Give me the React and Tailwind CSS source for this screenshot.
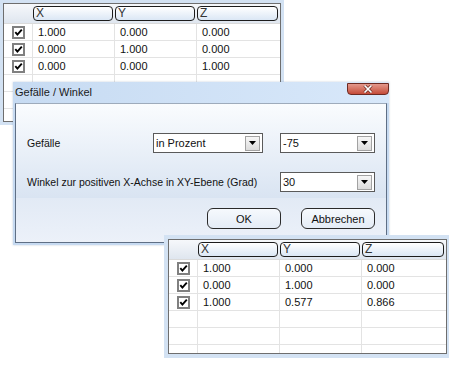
import React from "react";

const CheckBox = () => (
  <svg width="13" height="13" viewBox="0 0 13 13">
    <rect x="1" y="1" width="11" height="11" fill="#fff" stroke="#808080" strokeWidth="2" />
    <path d="M3.3 6.2 L5.4 8.6 L9.8 3.6" stroke="#000" strokeWidth="1.9" fill="none" />
  </svg>
);

const Arrow = () => (
  <svg width="7" height="4" viewBox="0 0 7 4">
    <path d="M0 0 H7 L3.5 4 Z" fill="#000" />
  </svg>
);

// grid with header cells X / Y / Z and checkbox column
const Grid = ({ rows, empty, className }) => (
  <div className={`absolute bg-[#d3e2f3] ${className}`}>
    <div className="h-full flex flex-col overflow-hidden border border-[#6e6e6e] bg-white">
      <div className="h-[20px] shrink-0 flex border-b border-[#dadada] bg-gradient-to-b from-[#f6f8fb] to-[#dfe6ef]">
        <div className="w-[29px]" />
        {["X", "Y", "Z"].map((h, i) => (
          <div key={h} className={`${i === 2 ? "flex-1" : "w-[82px]"} pt-[2px] pr-[2px]`}>
            <div className="h-[15px] rounded-[4px] border-[1.5px] border-[#1c1c1c] bg-gradient-to-b from-white to-[#dbe7f5] pl-[2px] text-[12px] leading-[12px] text-[#333]">
              {h}
            </div>
          </div>
        ))}
      </div>
      {rows.map((r, i) => (
        <div key={i} className="h-[17px] shrink-0 flex border-b border-[#e3e3e3] text-[11px] leading-[16px] text-[#111]">
          <div className="w-[29px] border-r border-[#e3e3e3] flex items-center justify-center">
            <CheckBox />
          </div>
          <div className="w-[82px] border-r border-[#e3e3e3] pl-[5px]">{r[0]}</div>
          <div className="w-[82px] border-r border-[#e3e3e3] pl-[5px]">{r[1]}</div>
          <div className="flex-1 pl-[5px]">{r[2]}</div>
        </div>
      ))}
      {Array.from({ length: empty }).map((_, i) => (
        <div key={i} className="h-[17px] shrink-0 flex border-b border-[#e3e3e3]">
          <div className="w-[29px] border-r border-[#e3e3e3]" />
          <div className="w-[82px] border-r border-[#e3e3e3]" />
          <div className="w-[82px] border-r border-[#e3e3e3]" />
          <div className="flex-1" />
        </div>
      ))}
    </div>
  </div>
);

const Combo = ({ value, width }) => (
  <div className={`${width} h-[20px] flex items-center border border-[#5a5a5a] bg-white pl-[2px] pr-[2px]`}>
    <span className="flex-1 text-[11px] leading-[14px] text-[#111]">{value}</span>
    <div className="w-[15px] h-[15px] flex items-center justify-center border border-[#a2a2a2] bg-gradient-to-b from-[#f7f7f7] to-[#dcdcdc]">
      <Arrow />
    </div>
  </div>
);

const Button = ({ children }) => (
  <button className="w-[74px] h-[21px] rounded-[6px] border-[1.5px] border-[#2a2a2a] bg-gradient-to-b from-[#f6f9fd] to-[#e4ecf6] text-[11px] leading-[14px] text-[#111]">
    {children}
  </button>
);

export default function App() {
  return (
    <div className="relative w-[449px] h-[365px] overflow-hidden bg-white font-['Liberation_Sans',Arial,sans-serif]">
      {/* top grid window */}
      <Grid
        className="left-0 top-0 w-[284px] h-[125px] pl-[3px] pt-[3px] pr-[3px] pb-[3px]"
        rows={[
          ["1.000", "0.000", "0.000"],
          ["0.000", "1.000", "0.000"],
          ["0.000", "0.000", "1.000"],
        ]}
        empty={3}
      />

      {/* dialog */}
      <div className="absolute left-[13px] top-[82px] w-[376px] h-[163px] flex flex-col bg-[#c6daf1] px-[2px] pb-[2px] shadow-[0_0_2px_rgba(60,90,130,0.3)]">
        <div className="relative h-[21px] shrink-0 -mx-[2px] px-[2px] pt-[4px] bg-gradient-to-r from-[#c7dbf2] to-[#d8e8fa] text-[11px] leading-[13px] text-[#1b1b1b]">
          Gefälle / Winkel
          <div className="absolute left-[334px] top-[1px] w-[42px] h-[12px] rounded-b-[4px] border border-[#6d2a22] bg-gradient-to-b from-[#e3988c] to-[#c44a38] flex items-center justify-center">
            <svg width="10" height="8" viewBox="0 0 10 8">
              <path d="M1.5 0.5 L8.5 7.5 M8.5 0.5 L1.5 7.5" stroke="#6b2a22" strokeWidth="3" />
              <path d="M1.5 0.5 L8.5 7.5 M8.5 0.5 L1.5 7.5" stroke="#fff" strokeWidth="1.6" />
            </svg>
          </div>
        </div>
        <div className="flex-1 flex flex-col border border-[#5f6f85] border-t-[#9eabbb]">
          <div className="h-[94px] flex flex-col gap-[19px] pl-[11px] pt-[29px] bg-gradient-to-b from-[#fafcfe] to-[#d9e4f2] text-[10.5px] leading-[14px] text-[#111]">
            <div className="flex items-center">
              <span className="w-[126px]">Gefälle</span>
              <Combo value="in Prozent" width="w-[110px]" />
              <div className="w-[17px]" />
              <Combo value="-75" width="w-[95px]" />
            </div>
            <div className="flex items-center">
              <span className="w-[253px]">Winkel zur positiven X-Achse in XY-Ebene (Grad)</span>
              <Combo value="30" width="w-[95px]" />
            </div>
          </div>
          <div className="flex-1 flex justify-end items-start gap-[20px] pr-[11px] pt-[10px] bg-gradient-to-b from-[#e2eaf5] to-[#ecf1f9]">
            <Button>OK</Button>
            <Button>Abbrechen</Button>
          </div>
        </div>
      </div>

      {/* bottom grid window */}
      <Grid
        className="left-[164px] top-[235px] w-[285px] h-[123px] pl-[4px] pt-[4px] pr-[2px] pb-[4px]"
        rows={[
          ["1.000", "0.000", "0.000"],
          ["0.000", "1.000", "0.000"],
          ["1.000", "0.577", "0.866"],
        ]}
        empty={3}
      />
    </div>
  );
}
